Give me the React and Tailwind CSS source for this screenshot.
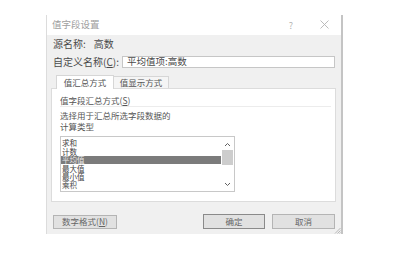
import React from "react";

const font = { fontFamily: '"Noto Sans CJK SC", "Noto Sans", sans-serif' };

export default function App() {
  const items = ["求和", "计数", "平均值", "最大值", "最小值", "乘积"];
  return (
    <div className="w-[405px] h-[254px] bg-white pl-[46px] pt-[15px]" style={font}>
      <div className="relative w-[297px] h-[219px] flex flex-col border-l border-[#dcdcdc] border-r-2 border-r-[#c4c4c4]">
        {/* title bar */}
        <div className="h-[20px] bg-white flex items-center pl-[5px] pr-[12px]">
          <span className="text-[9.5px] text-[#a0a0a0] leading-none">值字段设置</span>
          <span className="ml-auto text-[9px] text-[#b4b4b4] leading-none mr-[27px]">?</span>
          <svg width="9" height="9" viewBox="0 0 9 9" className="mb-[1px]">
            <path d="M0.5 0.5 L8.5 8.5 M8.5 0.5 L0.5 8.5" stroke="#b4b4b4" strokeWidth="0.9" fill="none" />
          </svg>
        </div>
        {/* body */}
        <div className="flex-1 bg-[#f0f0f0] px-[6px] flex flex-col text-[#4a4a4a]">
          <div className="mt-[3px] h-[12px] flex items-center text-[10px] leading-none">
            <span>源名称:</span>
            <span className="ml-[8px]">高数</span>
          </div>
          <div className="mt-[6px] h-[12px] flex items-center text-[10px] leading-none">
            <span className="w-[69px]">
              自定义名称(<span className="underline">C</span>):
            </span>
            <div className="flex-1 h-[12px] bg-white border border-[#c6c6c6] flex items-center pl-[4px] text-[9.5px]">
              平均值项:高数
            </div>
          </div>
          {/* tabs */}
          <div className="mt-[6px] flex items-end h-[14px] ml-[3px] text-[8.5px] leading-none text-[#555]">
            <div className="w-[58px] h-[14px] bg-white border border-b-0 border-[#d6d6d6] flex items-center justify-center relative z-10 mb-[-1px]">
              值汇总方式
            </div>
            <div className="w-[55px] h-[12px] bg-[#f5f5f5] border border-l-0 border-b-0 border-[#d6d6d6] flex items-center justify-center">
              值显示方式
            </div>
          </div>
          <div className="ml-[-2px] w-[285px] h-[114px] bg-white border border-[#dcdcdc] pl-[8px] pr-[4px] pt-[7px] text-[8.5px] leading-none text-[#555]">
            <div className="h-[11px] border-b border-[#ececec] flex items-start">
              值字段汇总方式(<span className="underline">S</span>)
            </div>
            <div className="mt-[3px] leading-[11px]">
              选择用于汇总所选字段数据的
              <br />
              计算类型
            </div>
            <div className="mt-[4px] w-[175px] h-[56px] border border-[#c8c8c8] flex">
              <div className="flex-1 pt-[2px] text-[7.5px] text-[#444]">
                {items.map((t) => (
                  <div
                    key={t}
                    className={
                      "h-[8.4px] flex items-center pl-[1px] leading-none " +
                      (t === "平均值" ? "bg-[#7b7b7b] text-[#e8e8e8]" : "")
                    }
                  >
                    {t}
                  </div>
                ))}
              </div>
              <div className="w-[13px] flex flex-col items-center">
                <svg width="7" height="5" viewBox="0 0 7 5" className="mt-[5px]">
                  <path d="M1 4 L3.5 1.5 L6 4" stroke="#606060" strokeWidth="1" fill="none" />
                </svg>
                <div className="mt-[3px] w-[11px] h-[15px] bg-[#cdcdcd]" />
                <svg width="7" height="5" viewBox="0 0 7 5" className="mt-auto mb-[4px]">
                  <path d="M1 1 L3.5 3.5 L6 1" stroke="#606060" strokeWidth="1" fill="none" />
                </svg>
              </div>
            </div>
          </div>
          {/* buttons */}
          <div className="mt-[12px] flex items-center text-[8.5px] leading-none text-[#666]">
            <div className="w-[64px] h-[14px] bg-[#e1e1e1] border border-[#b4b4b4] flex items-center justify-center">
              数字格式(<span className="underline">N</span>)
            </div>
            <div className="ml-auto w-[62px] h-[15px] bg-[#e1e1e1] border border-[#8a8a8a] flex items-center justify-center">
              确定
            </div>
            <div className="ml-[7px] w-[63px] h-[15px] bg-[#e1e1e1] border border-[#b4b4b4] flex items-center justify-center">
              取消
            </div>
          </div>
        </div>
        <svg width="7" height="7" viewBox="0 0 7 7" className="absolute right-[0px] bottom-[0px]">
          <path d="M6.5 1 L1 6.5 M6.5 3.5 L3.5 6.5 M6.5 5.5 L5.5 6.5" stroke="#a8a8a8" strokeWidth="0.8" />
        </svg>
      </div>
    </div>
  );
}
